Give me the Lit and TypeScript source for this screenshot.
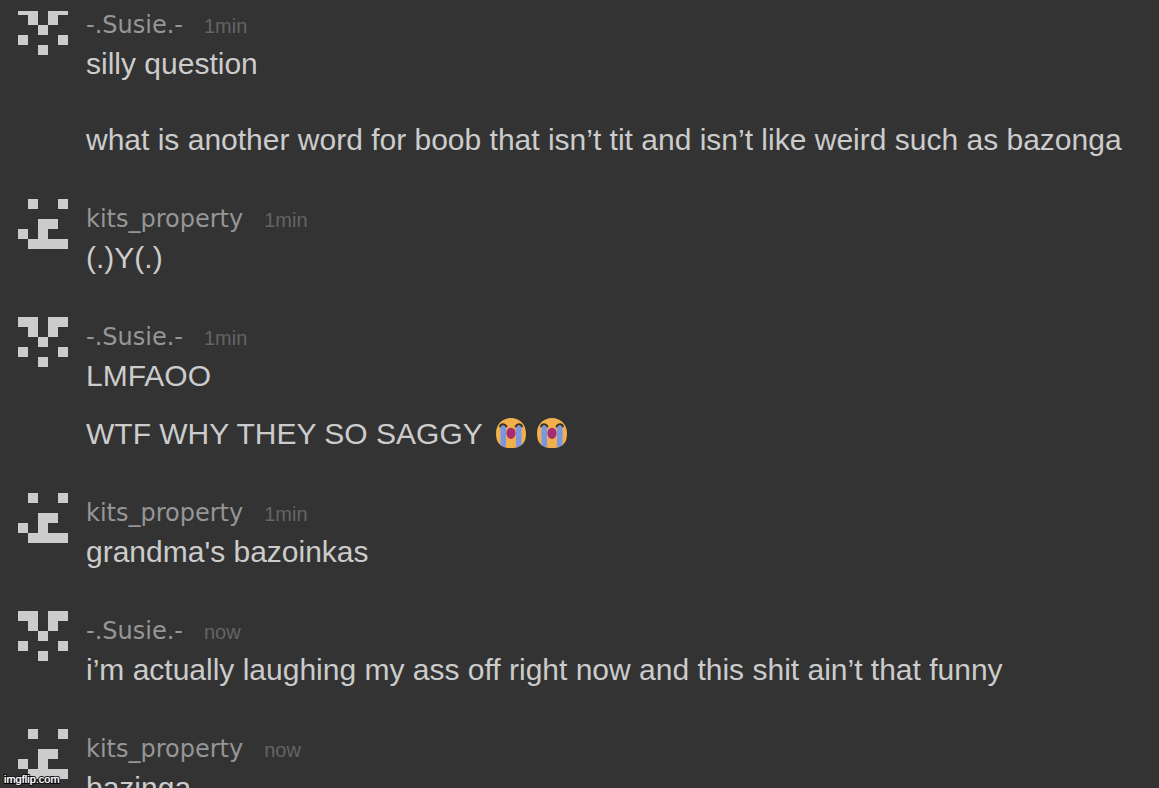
import { LitElement, html, css, svg } from "lit";
import { customElement, property } from "lit/decorators.js";

interface Group {
  user: string;
  time: string;
  messages: string[];
}

const AVATARS: Record<string, string[]> = {
  "-.Susie.-": ["11011", "01010", "00100", "10001", "00100"],
  kits_property: ["01001", "00000", "00110", "10100", "01111"],
};

const GROUPS: Group[] = [
  {
    user: "-.Susie.-",
    time: "1min",
    messages: [
      "silly question\n\nwhat is another word for boob that isn’t tit and isn’t like weird such as bazonga",
    ],
  },
  { user: "kits_property", time: "1min", messages: ["(.)Y(.)"] },
  { user: "-.Susie.-", time: "1min", messages: ["LMFAOO", "WTF WHY THEY SO SAGGY 😭😭"] },
  { user: "kits_property", time: "1min", messages: ["grandma's bazoinkas"] },
  {
    user: "-.Susie.-",
    time: "now",
    messages: ["i’m actually laughing my ass off right now and this shit ain’t that funny"],
  },
  { user: "kits_property", time: "now", messages: ["bazinga"] },
];

@customElement("pixel-avatar")
class PixelAvatar extends LitElement {
  @property({ attribute: false }) rows: string[] = [];

  static styles = css`
    :host {
      display: block;
    }
    .avatar {
      display: block;
      width: 50px;
      height: 50px;
      fill: #cccccc;
    }
  `;

  render() {
    return html`<svg class="avatar" viewBox="0 0 5 5" shape-rendering="crispEdges" aria-hidden="true">
      ${this.rows.map((row, y) =>
        [...row].map((c, x) => (c === "1" ? svg`<rect x=${x} y=${y} width="1" height="1" />` : null))
      )}
    </svg>`;
  }
}

@customElement("sob-emoji")
class SobEmoji extends LitElement {
  static styles = css`
    :host {
      display: inline-block;
      width: 30px;
      height: 30px;
      margin: 0 6px 0 5px;
      vertical-align: -4px;
    }
    .face {
      display: block;
      width: 30px;
      height: 30px;
    }
  `;

  render() {
    return html`<svg class="face" viewBox="0 0 30 30" role="img" aria-label="😭">
      <path
        fill="#f0b04c"
        d="M15 0C23.500 0 30 6.500 30 15C30 22 28 26 24 28C21 30 18 30 15 30C12 30 9 30 6 28C2 26 0 22 0 15C0 6.500 6.500 0 15 0Z"
      />
      <path fill="#7896e4" d="M4.5 8H10V29.2Q7 28.7 4.5 27Z M20 8H25.5V27Q23 28.7 20 29.2Z" />
      <path
        fill="none"
        stroke="#38302c"
        stroke-width="1.8"
        stroke-linecap="round"
        d="M4 8.5C5 5.5 9 5.5 10.5 8.5 M19.500 8.500C21 5.500 25 5.500 26 8.500"
      />
      <ellipse cx="15" cy="15.300" rx="4.600" ry="5.600" fill="#a72c74" />
    </svg>`;
  }
}

@customElement("app-root")
class AppRoot extends LitElement {
  static styles = css`
    :host {
      display: block;
      position: relative;
      box-sizing: border-box;
      height: 100vh;
      padding-top: 11px;
      overflow: hidden;
      background: #333333;
      color: #cccccc;
      font-family: "Liberation Sans", Arial, sans-serif;
    }
    .viewport {
      height: 100%;
      overflow: hidden;
    }
    .feed {
      display: flex;
      flex-direction: column;
      gap: 40px;
      margin: -6px 0 0;
      padding: 0 18px;
      list-style: none;
    }
    .group {
      display: grid;
      grid-template-columns: 50px 1fr;
      column-gap: 18px;
    }
    .head {
      display: flex;
      align-items: baseline;
      gap: 21px;
      height: 40px;
      line-height: 40px;
    }
    .name {
      font-family: "DejaVu Sans", Verdana, sans-serif;
      font-size: 24px;
      color: #969696;
    }
    .time {
      font-size: 20px;
      color: #646464;
    }
    .messages {
      display: flex;
      flex-direction: column;
      gap: 20px;
    }
    .message {
      margin: 0;
      font-size: 30px;
      line-height: 38px;
      white-space: pre-line;
    }
    .mark {
      position: absolute;
      left: 4px;
      bottom: 2px;
      font-size: 11px;
      line-height: 13px;
      color: #ffffff;
      text-shadow: 0 0 1px #ffffff;
      -webkit-text-stroke: 2px #000000;
      paint-order: stroke fill;
    }
  `;

  private text(message: string) {
    return message.split(/(😭)/u).map((part) => (part === "😭" ? html`<sob-emoji></sob-emoji>` : part));
  }

  render() {
    return html`
      <main class="viewport">
        <ul class="feed">
          ${GROUPS.map(
            (g) => html`<li class="group">
              <pixel-avatar .rows=${AVATARS[g.user]}></pixel-avatar>
              <article>
                <header class="head"><span class="name">${g.user}</span><time class="time">${g.time}</time></header>
                <div class="messages">${g.messages.map((m) => html`<p class="message">${this.text(m)}</p>`)}</div>
              </article>
            </li>`
          )}
        </ul>
      </main>
      <span class="mark">imgflip.com</span>
    `;
  }
}
